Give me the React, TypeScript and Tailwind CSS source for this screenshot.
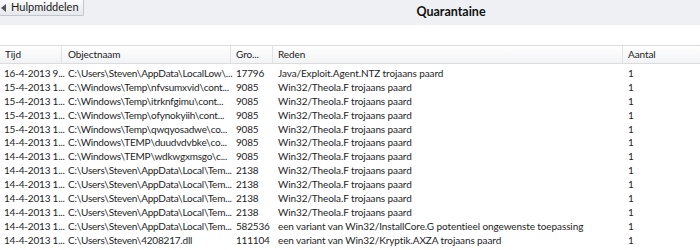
import React from 'react';

const rows = [
  ['16-4-2013 9...', 'C:\\Users\\Steven\\AppData\\LocalLow\\...', '17796', 'Java/Exploit.Agent.NTZ trojaans paard'],
  ['15-4-2013 1...', 'C:\\Windows\\Temp\\nfvsumxvid\\cont...', '9085', 'Win32/Theola.F trojaans paard'],
  ['15-4-2013 1...', 'C:\\Windows\\Temp\\itrknfgimu\\cont...', '9085', 'Win32/Theola.F trojaans paard'],
  ['15-4-2013 1...', 'C:\\Windows\\Temp\\ofynokyiih\\cont...', '9085', 'Win32/Theola.F trojaans paard'],
  ['15-4-2013 1...', 'C:\\Windows\\Temp\\qwqyosadwe\\co...', '9085', 'Win32/Theola.F trojaans paard'],
  ['14-4-2013 1...', 'C:\\Windows\\TEMP\\duudvdvbke\\co...', '9085', 'Win32/Theola.F trojaans paard'],
  ['14-4-2013 1...', 'C:\\Windows\\TEMP\\wdkwgxmsgo\\c...', '9085', 'Win32/Theola.F trojaans paard'],
  ['14-4-2013 1...', 'C:\\Users\\Steven\\AppData\\Local\\Tem...', '2138', 'Win32/Theola.F trojaans paard'],
  ['14-4-2013 1...', 'C:\\Users\\Steven\\AppData\\Local\\Tem...', '2138', 'Win32/Theola.F trojaans paard'],
  ['14-4-2013 1...', 'C:\\Users\\Steven\\AppData\\Local\\Tem...', '2138', 'Win32/Theola.F trojaans paard'],
  ['14-4-2013 1...', 'C:\\Users\\Steven\\AppData\\Local\\Tem...', '2138', 'Win32/Theola.F trojaans paard'],
  ['14-4-2013 1...', 'C:\\Users\\Steven\\AppData\\Local\\Tem...', '582536', 'een variant van Win32/InstallCore.G potentieel ongewenste toepassing'],
  ['14-4-2013 1...', 'C:\\Users\\Steven\\4208217.dll', '111104', 'een variant van Win32/Kryptik.AXZA trojaans paard'],
];

export default function App() {
  return (
    <div className="w-[700px] h-[250px] overflow-hidden bg-white text-[#1e1e1e] text-[10px] tracking-[-0.1px] font-['Lato',sans-serif]">
      {/* top bar */}
      <div className="relative h-[25px] bg-[#eef0f3] flex items-start">
        <button className="h-[16px] w-[84px] flex items-center gap-[5px] pl-[1px] bg-gradient-to-b from-[#fbfbfc] to-[#e6e8ec] border-r border-b border-[#c3c6cc] rounded-br-[2px] text-[11px] tracking-normal text-[#1a1a1a]">
          <span className="w-0 h-0 border-y-[4px] border-y-transparent border-r-[5px] border-r-[#555]" />
          Hulpmiddelen
        </button>
        <div className="flex-1 flex justify-center pl-[118px] pt-[3px] font-bold text-[12.5px] tracking-normal text-[#111]">Quarantaine</div>
      </div>
      <div className="h-[20px] bg-white" />
      {/* header */}
      <div className="flex h-[19px] items-center border-t border-b border-[#dcdcdc] bg-gradient-to-b from-[#ffffff] to-[#f2f3f5] text-[#222]">
        <div className="w-[62px] shrink-0 pl-[5px] h-full flex items-center border-r border-[#e2e2e2]">Tijd</div>
        <div className="w-[169px] shrink-0 pl-[6px] h-full flex items-center border-r border-[#e2e2e2]">Objectnaam</div>
        <div className="w-[42px] shrink-0 pl-[5px] h-full flex items-center border-r border-[#e2e2e2]">Gro...</div>
        <div className="w-[350px] shrink-0 pl-[5px] h-full flex items-center border-r border-[#e2e2e2]">Reden</div>
        <div className="flex-1 pl-[5px] h-full flex items-center">Aantal</div>
      </div>
      <div className="pt-[2px]">
        {rows.map((r, i) => (
          <div key={i} className="flex h-[13.9px] items-center whitespace-nowrap leading-none">
            <div className="w-[62px] shrink-0 pl-[4px] tracking-[-0.2px]">{r[0]}</div>
            <div className="w-[169px] shrink-0 pl-[6px] tracking-[-0.2px]">{r[1]}</div>
            <div className="w-[42px] shrink-0 pl-[5px] tracking-[-0.2px]">{r[2]}</div>
            <div className="w-[350px] shrink-0 pl-[5px]">{r[3]}</div>
            <div className="flex-1 pl-[5px]">1</div>
          </div>
        ))}
      </div>
    </div>
  );
}
